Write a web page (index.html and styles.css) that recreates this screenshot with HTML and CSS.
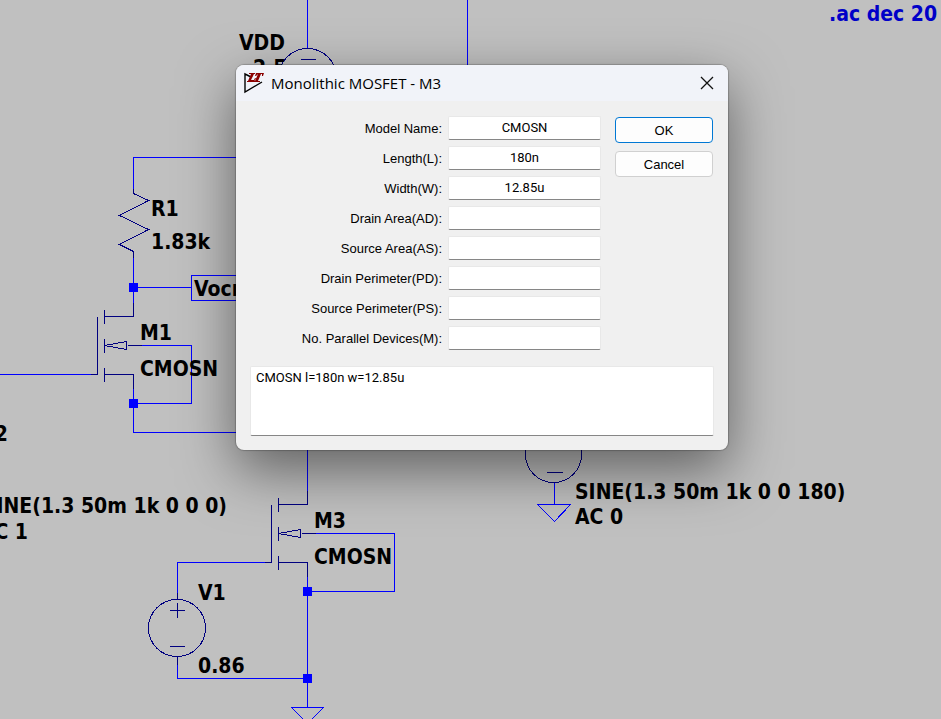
FILE: index.html
```
<!DOCTYPE html>
<html lang="en">
<head>
<meta charset="utf-8">
<title>Schematic editor</title>
<link rel="stylesheet" href="styles.css">
</head>
<body>
<main class="workspace">
  <svg class="schematic" role="img" aria-label="Differential amplifier schematic">
    <defs>
      <g id="nmos" class="symbol">
        <path d="M36 -14V0H7M7 -7V7M0 0V58H-7M7 22V36M7 51V65M7 58H36V72M30 29H44"/>
        <path d="M7 29L29 25V33Z"/>
      </g>
      <g id="source" class="symbol">
        <circle cx="-.5" cy="-.5" r="28.5"/>
        <path d="M-8 -18H7M0 -26V-11M-8 18H7M0 -29V-36M0 28V36"/>
      </g>
    </defs>
    <g class="drawing" transform="translate(.5 .5)">
      <path class="wire" d="M307 -1V48M467 -1V70M240 157H133V188M133 257V303M133 287H191M240 275H191V300H240M141 345H191V403H133M133 388V432H240M-1 374H91"/>
      <path class="wire" d="M307 445V490M315 533H394V591H307M307 576V707M264 562H177V593M177 663V678H307M554 482V504"/>
      <path class="wire" d="M291 707H323L307 723ZM537 504H570L554 521Z"/>
      <path class="symbol" d="M133 188V193L148 200L119 215L148 229L119 244L133 251V257"/>
      <use href="#nmos" x="97" y="316"/>
      <use href="#nmos" x="271" y="504"/>
      <use href="#source" x="177" y="628"/>
      <circle class="symbol" cx="307" cy="77" r="29"/>
      <circle class="symbol" cx="553" cy="454" r="28"/>
      <path class="symbol" d="M300 59H315M546 472H562"/>
      <path class="node" d="M129 283h9v9h-9zM129 399h9v9h-9zM303 587h9v9h-9zM303 674h9v9h-9z" transform="translate(-.5 -.5)"/>
    </g>
    <g class="labels">
      <text x="239" y="50">VDD</text>
      <text x="253" y="75">2.5</text>
      <text x="151" y="216">R1</text>
      <text x="151" y="249">1.83k</text>
      <text x="194" y="296">Vocm</text>
      <text x="140" y="340">M1</text>
      <text x="140" y="376">CMOSN</text>
      <text class="end" x="8" y="441">2</text>
      <text class="end" x="227" y="513">SINE(1.3 50m 1k 0 0 0)</text>
      <text class="end" x="28" y="539">AC 1</text>
      <text x="314" y="528">M3</text>
      <text x="314" y="564">CMOSN</text>
      <text x="198" y="600">V1</text>
      <text x="198" y="673">0.86</text>
      <text x="575" y="499">SINE(1.3 50m 1k 0 0 180)</text>
      <text x="575" y="524">AC 0</text>
      <text class="directive" x="829" y="21">.ac dec 20</text>
    </g>
  </svg>

  <section class="dialog" role="dialog" aria-labelledby="dialog-title">
    <header class="titlebar">
      <svg class="logo" viewBox="0 0 20 22" aria-hidden="true">
        <path class="logo-frame" d="M7 5L1 2V20L18 10"/>
        <path class="logo-mark" d="M5 1H11V2H10L7 8H10L11 6H12L10 10H3V9H4L7 2H5ZM12 1H20L19 4H18V2H17L14 9H16V10H10V9H11L14 2L12 4H11Z"/>
      </svg>
      <h1 class="title" id="dialog-title">Monolithic MOSFET - M3</h1>
      <button class="close" type="button" aria-label="Close">
        <svg class="close-icon" viewBox="0 0 14 14" aria-hidden="true"><path d="M1 1L13 13M13 1L1 13"/></svg>
      </button>
    </header>
    <form class="content">
      <div class="top">
        <div class="fields">
          <label for="model">Model Name:</label><input id="model" type="text" value="CMOSN">
          <label for="length">Length(L):</label><input id="length" type="text" value="180n">
          <label for="width">Width(W):</label><input id="width" type="text" value="12.85u">
          <label for="ad">Drain Area(AD):</label><input id="ad" type="text">
          <label for="as">Source Area(AS):</label><input id="as" type="text">
          <label for="pd">Drain Perimeter(PD):</label><input id="pd" type="text">
          <label for="ps">Source Perimeter(PS):</label><input id="ps" type="text">
          <label for="m">No. Parallel Devices(M):</label><input id="m" type="text">
        </div>
        <div class="actions">
          <button class="button primary" type="button">OK</button>
          <button class="button" type="button">Cancel</button>
        </div>
      </div>
      <textarea class="netlist" aria-label="Device parameters">CMOSN l=180n w=12.85u</textarea>
    </form>
  </section>
</main>
</body>
</html>
```
FILE: styles.css
```
* { box-sizing: border-box; }

body {
  margin: 0;
  font: 13px/16px Roboto, "Liberation Sans", sans-serif;
  color: #000;
}

.workspace {
  position: relative;
  min-height: 100vh;
  background: #c0c0c0;
  overflow: hidden;
}

.schematic {
  position: absolute;
  inset: 0;
  width: 100%;
  height: 100%;
}

.drawing { shape-rendering: crispEdges; }
.wire { fill: none; stroke: #0000ff; }
.symbol { fill: none; stroke: #000080; }
.node { fill: #0000ff; }

.labels {
  font: bold 21px "DejaVu Sans Condensed", "Noto Sans", sans-serif;
  fill: #000;
}
.labels .end { text-anchor: end; }
.labels .directive { fill: #0000c8; }

.dialog {
  position: absolute;
  left: 236px;
  top: 65px;
  width: 492px;
  border-radius: 8px;
  background: #f0f0f0;
  overflow: hidden;
  box-shadow: 0 0 1px 1px rgba(0, 0, 0, .2), 0 20px 56px rgba(0, 0, 0, .5);
}

.titlebar {
  display: flex;
  align-items: center;
  height: 36px;
  padding: 0 14px 0 8px;
  gap: 7px;
  background: #f1f3f9;
}
.logo { width: 20px; height: 22px; }
.logo-frame { fill: none; stroke: #000; stroke-width: 1.4; }
.logo-mark { fill: #8b0000; }
.title {
  flex: 1;
  margin: 0;
  font: 15px/20px "Open Sans", "Noto Sans", sans-serif;
}
.close {
  display: flex;
  padding: 0;
  border: 0;
  background: none;
}
.close-icon { width: 14px; height: 14px; fill: none; stroke: #111; stroke-width: 1.3; }

.content { padding: 15px 14px 14px; }
.top { display: flex; gap: 14px; }
.fields {
  flex: 1;
  display: grid;
  grid-template-columns: 1fr 153px;
  grid-auto-rows: 24px;
  gap: 6px;
  align-items: center;
  text-align: right;
}
.fields label {
  padding-top: 2px;
  font-family: "Liberation Sans", Arial, sans-serif;
}
input, .netlist {
  font: inherit;
  color: inherit;
  border: 1px solid #e8e8e8;
  border-bottom-color: #868686;
  border-radius: 2px;
  background: #fff;
  outline: 0;
}
input {
  width: 100%;
  height: 24px;
  padding: 0 2px 2px;
  text-align: center;
}
.actions {
  display: flex;
  flex-direction: column;
  gap: 8px;
  width: 98px;
  margin-right: 1px;
  padding-top: 1px;
}
.button {
  height: 26px;
  padding: 2px 0 0;
  border: 1px solid #d0d0d0;
  border-radius: 4px;
  background: #fdfdfd;
  font: 13px/16px "Liberation Sans", Arial, sans-serif;
  color: inherit;
}
.primary { border-color: #0078d4; }
.netlist {
  display: block;
  width: 100%;
  height: 70px;
  margin-top: 16px;
  padding: 3px 5px;
  resize: none;
}
```
